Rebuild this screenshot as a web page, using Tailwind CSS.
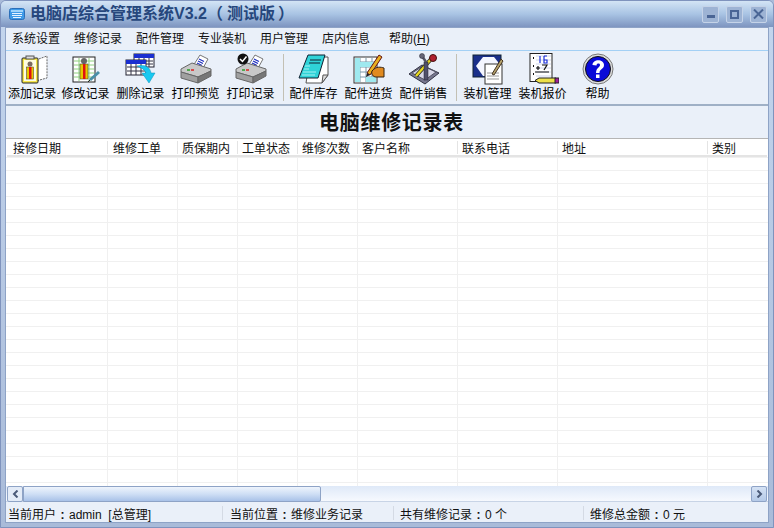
<!DOCTYPE html>
<html lang="en">
<head>
    <meta charset="UTF-8">
    <title>电脑店综合管理系统</title>
    <script src="https://cdn.jsdelivr.net/npm/@tailwindcss/browser@4"></script>
</head>
<body class="w-[774px] h-[528px] overflow-hidden bg-[#a9bbd9] font-['Liberation_Sans','Noto_Sans_CJK_SC',sans-serif] text-[12px] text-black">
<div class="w-[774px] h-[528px] flex flex-col border border-[#7f93bd] rounded-t-[6px] overflow-hidden bg-gradient-to-b from-[#c4d6ee] to-[#a9bbd9]">

    <!-- Title bar -->
    <div class="h-[26px] shrink-0 flex items-center pl-[8px] bg-gradient-to-b from-[#d3e4f5] via-[#a9c4e4] to-[#7e95c0]">
        <svg width="16" height="14" viewBox="0 0 16 14">
            <rect x="0.5" y="1.5" width="15" height="11" rx="2" fill="#3f9be8" stroke="#2c6fb8"/>
            <rect x="2" y="3" width="12" height="2" fill="#9fd4fb"/>
            <rect x="3" y="6" width="10" height="1" fill="#e8f4ff"/>
            <rect x="3" y="8" width="10" height="1" fill="#e8f4ff"/>
            <rect x="4" y="10" width="8" height="1" fill="#e8f4ff"/>
        </svg>
        <div class="ml-[5px] text-[16px] leading-[20px] font-bold text-[#26477c] whitespace-nowrap">电脑店综合管理系统V3.2（<span class="ml-[4px] mr-[3px]">测试版</span>）</div>
        <div class="ml-auto flex gap-[7px] pr-[6px]">
            <div class="w-[17px] h-[17px] rounded-[2px] border border-[#c5d3e8] bg-[#9db3d4] flex items-center justify-center">
                <div class="w-[8px] h-[3px] mt-[5px] bg-[#4a6595]"></div>
            </div>
            <div class="w-[17px] h-[17px] rounded-[2px] border border-[#c5d3e8] bg-[#9db3d4] flex items-center justify-center">
                <div class="w-[9px] h-[9px] border-2 border-[#4a6595]"></div>
            </div>
            <div class="w-[17px] h-[17px] rounded-[2px] border border-[#c5d3e8] bg-[#9db3d4] flex items-center justify-center">
                <svg width="11" height="10" viewBox="0 0 11 10"><path d="M1 0.5 L10 9.5 M10 0.5 L1 9.5" stroke="#4a6595" stroke-width="2"/></svg>
            </div>
        </div>
    </div>

    <!-- Client area -->
    <div class="flex-1 min-h-0 mx-[4px] mb-[4px] flex flex-col border border-[#8ea3c6] bg-[#eaf0f9]">

        <!-- Menu -->
        <div class="h-[23px] shrink-0 flex items-center border-b border-[#a3d0f5] text-[#111]">
            <span class="ml-[6px] w-[62px]">系统设置</span>
            <span class="w-[62px]">维修记录</span>
            <span class="w-[62px]">配件管理</span>
            <span class="w-[62px]">专业装机</span>
            <span class="w-[62px]">用户管理</span>
            <span class="w-[67px]">店内信息</span>
            <span>帮助(<span class="underline">H</span>)</span>
        </div>

        <!-- Toolbar -->
        <div class="h-[55px] shrink-0 flex items-start pt-[2px] border-b-2 border-[#9fb0c6]">
            <div class="w-[52px] flex flex-col items-center">
                <svg width="32" height="32" viewBox="0 0 32 32">
                    <path d="M20 7 L31 3 V25 L20 28" fill="#fff" stroke="#666" stroke-dasharray="2 1"/>
                    <rect x="6" y="5" width="16" height="25" rx="1" fill="#f6e64a" stroke="#222"/>
                    <rect x="8" y="7" width="12" height="21" fill="#fffde0"/>
                    <rect x="10" y="3" width="8" height="3" fill="#ddd" stroke="#555"/>
                    <circle cx="14" cy="11" r="2.5" fill="#7a6a60"/>
                    <rect x="10.500" y="14" width="7" height="12" fill="#e8c800" stroke="#333" stroke-width="0.500"/>
                    <rect x="13" y="14" width="2.500" height="12" fill="#e01010"/>
                </svg>
                <span class="leading-[15px] mt-[2px] whitespace-nowrap">添加记录</span>
            </div>
            <div class="w-[55px] flex flex-col items-center">
                <svg width="32" height="32" viewBox="0 0 32 32">
                    <rect x="3" y="4" width="22" height="25" fill="#fff" stroke="#222"/>
                    <path d="M4 8h20M4 12h20M4 16h20M4 20h20M4 24h20M9 5v23M19 5v23" stroke="#8fd07e"/>
                    <circle cx="14" cy="8" r="3" fill="#666"/>
                    <rect x="10" y="11" width="8" height="15" fill="#e8c800" stroke="#333" stroke-width="0.500"/>
                    <rect x="13" y="11" width="2.500" height="15" fill="#e01010"/>
                    <path d="M20 27 L29 19" stroke="#4a8fa8" stroke-width="3"/>
                    <path d="M18 29l2-2" stroke="#222"/>
                </svg>
                <span class="leading-[15px] mt-[2px] whitespace-nowrap">修改记录</span>
            </div>
            <div class="w-[55px] flex flex-col items-center">
                <svg width="32" height="32" viewBox="0 0 32 32">
                    <rect x="9" y="1" width="20" height="13" fill="#fff" stroke="#223"/>
                    <rect x="9" y="1" width="20" height="4" fill="#1a2fd0"/>
                    <path d="M10 8h18M10 11h18M14 5v9M19 5v9M24 5v9" stroke="#334"/>
                    <rect x="1" y="7" width="20" height="15" fill="#fff" stroke="#223"/>
                    <rect x="1" y="7" width="20" height="4" fill="#1a2fd0"/>
                    <path d="M2 14h18M2 18h18M6 11v11M11 11v11M16 11v11" stroke="#334"/>
                    <path d="M12 13 C20 11 25 14 26 20 H30 L24 30 L17 20 H21 C20 17 17 15 12 13 Z" fill="#19c8f0" stroke="#0a93b8" stroke-width="0.5"/>
                </svg>
                <span class="leading-[15px] mt-[2px] whitespace-nowrap">删除记录</span>
            </div>
            <div class="w-[55px] flex flex-col items-center">
                <svg width="32" height="32" viewBox="0 0 32 32">
                    <path d="M13 13 L20 2 L28 6 L22 17 Z" fill="#fff" stroke="#777"/>
                    <path d="M19 6l5 2.500M18 8l5 2.500M17 10l5 2.500" stroke="#2030c0" stroke-width="1.200"/>
                    <path d="M1 16 L12 10 L31 16 L31 18 L18 24 L1 19 Z" fill="#c8c8c8" stroke="#666"/>
                    <path d="M1 19 L18 24 V30 L1 25 Z" fill="#a0a0a0" stroke="#666"/>
                    <path d="M18 24 L31 18 V23 L18 30 Z" fill="#777" stroke="#666"/>
                    <path d="M7 17h3" stroke="#2aa02a" stroke-width="1.500"/>
                    <path d="M11 17h3" stroke="#e02020" stroke-width="1.500"/>
                </svg>
                <span class="leading-[15px] mt-[2px] whitespace-nowrap">打印预览</span>
            </div>
            <div class="w-[55px] flex flex-col items-center">
                <svg width="32" height="32" viewBox="0 0 32 32">
                    <path d="M13 13 L20 2 L28 6 L22 17 Z" fill="#fff" stroke="#777"/>
                    <path d="M19 6l5 2.500M18 8l5 2.500M17 10l5 2.500" stroke="#2030c0" stroke-width="1.200"/>
                    <path d="M1 16 L12 10 L31 16 L31 18 L18 24 L1 19 Z" fill="#c8c8c8" stroke="#666"/>
                    <path d="M1 19 L18 24 V30 L1 25 Z" fill="#a0a0a0" stroke="#666"/>
                    <path d="M18 24 L31 18 V23 L18 30 Z" fill="#777" stroke="#666"/>
                    <path d="M7 17h3" stroke="#2aa02a" stroke-width="1.500"/>
                    <path d="M11 17h3" stroke="#e02020" stroke-width="1.500"/>
                    <circle cx="8" cy="6" r="5.500" fill="#111"/>
                    <path d="M5 6l2.500 2.500L11.500 3.500" fill="none" stroke="#fff" stroke-width="1.500"/>
                </svg>
                <span class="leading-[15px] mt-[2px] whitespace-nowrap">打印记录</span>
            </div>
            <div class="w-[1px] h-[47px] mt-[1px] ml-[5px] bg-[#c3c0b4]"></div>
            <div class="w-[55px] ml-[2px] flex flex-col items-center">
                <svg width="32" height="32" viewBox="0 0 32 32">
                    <path d="M12 4 H30 V22 L24 30 H8 Z" fill="#fff" stroke="#555"/>
                    <path d="M24 30 L30 22 H25 Z" fill="#ddd" stroke="#555"/>
                    <path d="M10 2 H27 L20 25 H1 Z" fill="#2fd3d8" stroke="#123"/>
                    <path d="M12 7h11M11 10h11" stroke="#123" stroke-width="1"/>
                    <path d="M5 19h13M4 22h13M7 13h5M6 16h5" stroke="#a6f2f2"/>
                </svg>
                <span class="leading-[15px] mt-[2px] whitespace-nowrap">配件库存</span>
            </div>
            <div class="w-[55px] flex flex-col items-center">
                <svg width="32" height="32" viewBox="0 0 32 32">
                    <rect x="1" y="4" width="23" height="26" fill="#fff" stroke="#333"/>
                    <path d="M2 9h21M2 14h21M2 19h21M2 24h21M7 5v24M13 5v24M19 5v24" stroke="#7a99aa"/>
                    <rect x="2" y="5" width="5" height="24" fill="#9fe9ef"/>
                    <rect x="2" y="9" width="21" height="5" fill="#9fe9ef"/>
                    <rect x="13" y="24" width="10" height="5" fill="#9fe9ef"/>
                    <path d="M14 20 L26 2 L29 4 L17 22 Z" fill="#e8b020" stroke="#611"/>
                    <path d="M14 20 L13 24 L17 22 Z" fill="#222"/>
                    <path d="M19 18 C23 13 28 14 31 15 V24 H23 C20 24 18 21 19 18 Z" fill="#e08a20" stroke="#321"/>
                </svg>
                <span class="leading-[15px] mt-[2px] whitespace-nowrap">配件进货</span>
            </div>
            <div class="w-[55px] flex flex-col items-center">
                <svg width="32" height="32" viewBox="0 0 32 32">
                    <path d="M1 21 L14 12 L31 20 L17 31 Z" fill="#77778f" stroke="#334"/>
                    <path d="M4 20 L15 13 L28 19 L17 27 Z" fill="#d8d8e8" stroke="#556"/>
                    <path d="M8 23 L24 5" stroke="#222" stroke-width="4"/>
                    <path d="M8 23 L24 5" stroke="#e8d820" stroke-width="2.500"/>
                    <rect x="16" y="9" width="4" height="18" fill="#50506a" stroke="#223" stroke-width="0.500"/>
                    <path d="M14 3 L18 9" stroke="#556" stroke-width="2.500"/>
                    <circle cx="25" cy="5" r="3.500" fill="#b02030" stroke="#411"/>
                    <circle cx="14" cy="3" r="2.500" fill="#667" stroke="#223" stroke-width="0.500"/>
                </svg>
                <span class="leading-[15px] mt-[2px] whitespace-nowrap">配件销售</span>
            </div>
            <div class="w-[1px] h-[47px] mt-[1px] ml-[5px] bg-[#c3c0b4]"></div>
            <div class="w-[55px] ml-[3px] flex flex-col items-center">
                <svg width="32" height="32" viewBox="0 0 32 32">
                    <rect x="1" y="2" width="28" height="22" fill="#1a2f8a" stroke="#123"/>
                    <path d="M4 13 L11 4 H22 L26 9 V19 L20 23 H11 Z" fill="#f4f6ff"/>
                    <rect x="13" y="11" width="17" height="20" fill="#fff" stroke="#333"/>
                    <path d="M15 20h12M15 23h12M15 26h12" stroke="#999"/>
                    <path d="M20 21 L29 6 L31 8 L22 22 Z" fill="#b5a26a" stroke="#432"/>
                </svg>
                <span class="leading-[15px] mt-[2px] whitespace-nowrap">装机管理</span>
            </div>
            <div class="w-[55px] flex flex-col items-center">
                <svg width="32" height="32" viewBox="0 0 32 32">
                    <rect x="3" y="0.500" width="22" height="28" fill="#fff" stroke="#222"/>
                    <path d="M6 5h1M6 13h1M6 21h1" stroke="#111" stroke-width="2"/>
                    <path d="M9 3h15M9 7h15M9 11h15M9 15h15M9 19h15M9 23h15" stroke="#ced6ea"/>
                    <path d="M13 3v7M17 3h3M17 3v7h3v-3h-3" fill="none" stroke="#1b2fd8" stroke-width="1.200"/>
                    <path d="M9 15h4M11 13v4M15 12h5l-3 5" fill="none" stroke="#111" stroke-width="1.200"/>
                    <path d="M8 19h14" stroke="#111" stroke-width="1.200"/>
                    <path d="M12 25 H29 V30 H12 L8 27.500 Z" fill="#ede04a" stroke="#222"/>
                    <rect x="28" y="25" width="4" height="5" fill="#a0209a" stroke="#222"/>
                </svg>
                <span class="leading-[15px] mt-[2px] whitespace-nowrap">装机报价</span>
            </div>
            <div class="w-[55px] flex flex-col items-center">
                <svg width="32" height="32" viewBox="0 0 32 32">
                    <circle cx="16" cy="16" r="15" fill="#ddd" stroke="#777"/>
                    <circle cx="16" cy="16" r="12.500" fill="#0a0ad8" stroke="#111"/>
                    <path d="M10.500 12 C10.500 5.500 22 5.500 22 12 C22 16.500 17.500 15.500 17.500 20 H14 C14 14.500 18 14.500 18 12 C18 10 14.500 10 14.500 12.500 Z" fill="#fff"/>
                    <rect x="14" y="21.500" width="3.500" height="3.500" fill="#fff"/>
                </svg>
                <span class="leading-[15px] mt-[2px] whitespace-nowrap">帮助</span>
            </div>
        </div>

        <!-- Report title -->
        <div class="h-[33px] shrink-0 flex items-center justify-center pl-[9px] pt-[2px] text-[20px] leading-[24px] tracking-[0.7px] font-bold text-[#111] border-b border-[#b5b5b5]">电脑维修记录表</div>

        <!-- Table -->
        <div class="flex-1 min-h-0 flex flex-col bg-white">
            <div class="h-[16px] shrink-0 flex pt-[2px] leading-[17px] text-[#111] whitespace-nowrap">
                <div class="w-[102px] h-[13px] pl-[7px] border-r border-[#e4e4e4]">接修日期</div>
                <div class="w-[70px] h-[13px] pl-[5px] border-r border-[#e4e4e4]">维修工单</div>
                <div class="w-[60px] h-[13px] pl-[4px] border-r border-[#e4e4e4]">质保期内</div>
                <div class="w-[60px] h-[13px] pl-[4px] border-r border-[#e4e4e4]">工单状态</div>
                <div class="w-[60px] h-[13px] pl-[4px] border-r border-[#e4e4e4]">维修次数</div>
                <div class="w-[100px] h-[13px] pl-[4px] border-r border-[#e4e4e4]">客户名称</div>
                <div class="w-[100px] h-[13px] pl-[4px] border-r border-[#e4e4e4]">联系电话</div>
                <div class="w-[150px] h-[13px] pl-[4px] border-r border-[#e4e4e4]">地址</div>
                <div class="flex-1 h-[13px] pl-[4px]">类别</div>
            </div>
            <div class="h-[2px] shrink-0 mx-[1px] bg-[#e4e4e4]"></div>
            <div class="flex-1 min-h-0 flex bg-[repeating-linear-gradient(to_bottom,#f0f0f0_0,#f0f0f0_1px,transparent_1px,transparent_13px)]">
                <div class="w-[102px] border-r border-[#f0f0f0]"></div>
                <div class="w-[70px] border-r border-[#f0f0f0]"></div>
                <div class="w-[60px] border-r border-[#f0f0f0]"></div>
                <div class="w-[60px] border-r border-[#f0f0f0]"></div>
                <div class="w-[60px] border-r border-[#f0f0f0]"></div>
                <div class="w-[100px] border-r border-[#f0f0f0]"></div>
                <div class="w-[100px] border-r border-[#f0f0f0]"></div>
                <div class="w-[150px] border-r border-[#f0f0f0]"></div>
            </div>

            <!-- Scrollbar -->
            <div class="h-[16px] shrink-0 flex bg-gradient-to-b from-[#dfe9f8] to-[#f6f9fe] border-b border-[#c8d4e6]">
                <div class="w-[16px] h-[16px] ml-[1px] rounded-[2px] border border-[#8ea3c6] bg-[#e3ebf7] flex items-center justify-center">
                    <svg width="7" height="8" viewBox="0 0 7 8"><path d="M5.500 0.500 L2 4 L5.500 7.500" fill="none" stroke="#4a5a78" stroke-width="2"/></svg>
                </div>
                <div class="w-[298px] h-[16px] rounded-r-[2px] border border-[#8ea3c6] bg-gradient-to-b from-[#eef4fc] via-[#cfdff5] to-[#a9c2e8]"></div>
                <div class="ml-auto w-[16px] h-[16px] mr-[1px] rounded-[2px] border border-[#8ea3c6] bg-gradient-to-b from-[#d5e2f4] to-[#b5cae8] flex items-center justify-center">
                    <svg width="7" height="8" viewBox="0 0 7 8"><path d="M1.500 0.500 L5 4 L1.500 7.500" fill="none" stroke="#4a5a78" stroke-width="2"/></svg>
                </div>
            </div>
        </div>

        <!-- Status bar -->
        <div class="h-[20px] shrink-0 flex items-start pt-[4px] text-[#111] bg-[#eaf0f9] leading-[18px] whitespace-nowrap">
            <div class="w-[217px] h-[14px] pl-[2px] border-r border-[#d4dae4]">当前用户<span class="inline-block w-[13px] text-center font-bold">:</span>admin&nbsp;&nbsp;[总管理]</div>
            <div class="w-[171px] h-[14px] pl-[7px] border-r border-[#d4dae4]">当前位置<span class="inline-block w-[13px] text-center font-bold">:</span>维修业务记录</div>
            <div class="w-[190px] h-[14px] pl-[6px] border-r border-[#d4dae4]">共有维修记录<span class="inline-block w-[13px] text-center font-bold">:</span>0 个</div>
            <div class="h-[14px] pl-[6px]">维修总金额<span class="inline-block w-[13px] text-center font-bold">:</span>0 元</div>
        </div>
    </div>
</div>
</body>
</html>
